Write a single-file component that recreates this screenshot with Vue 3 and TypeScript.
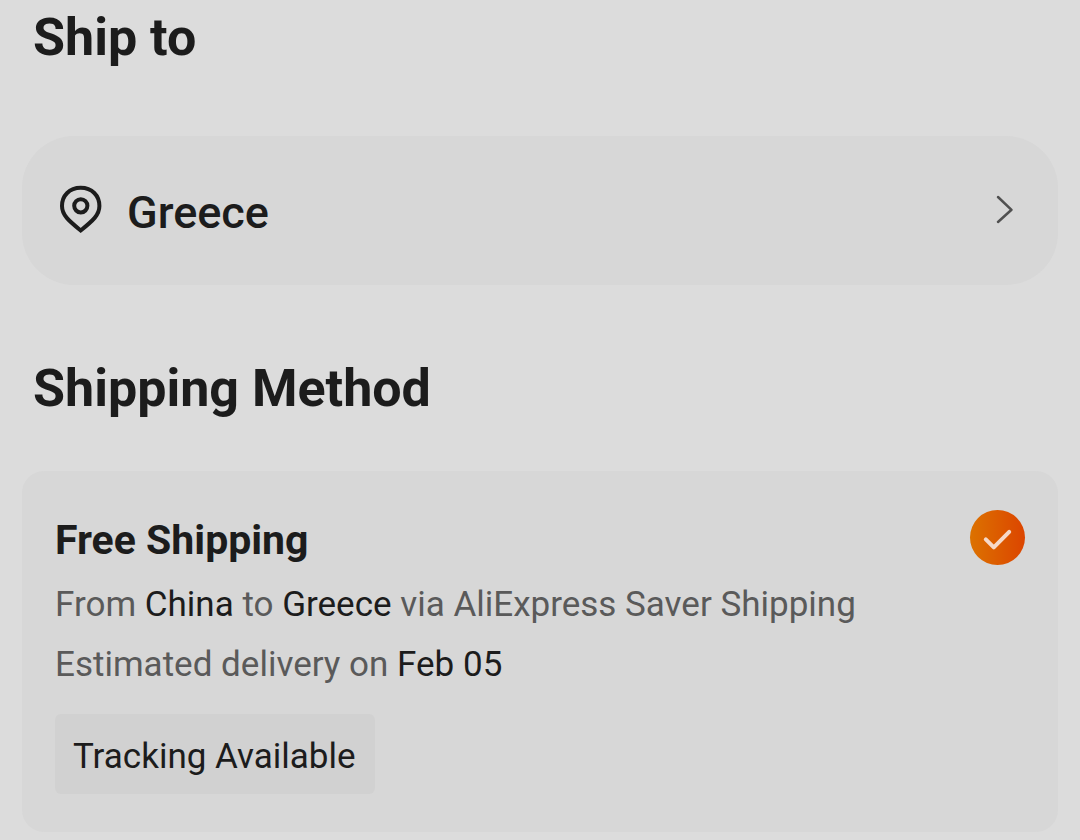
<script setup lang="ts">
import { ref } from 'vue'

interface ShippingMethod {
  id: string
  title: string
  origin: string
  carrier: string
  delivery: string
  tag: string
}

const country = ref('Greece')
const selected = ref('saver')
const methods: ShippingMethod[] = [
  {
    id: 'saver',
    title: 'Free Shipping',
    origin: 'China',
    carrier: 'AliExpress Saver Shipping',
    delivery: 'Feb 05',
    tag: 'Tracking Available',
  },
]
</script>

<template>
  <main class="page">
    <section>
      <h2 class="title">Ship to</h2>
      <button type="button" class="country">
        <svg class="pin" viewBox="0 0 44 50" aria-hidden="true">
          <path d="M21.700 2.800C10.500 2.800 3 10.500 3 21C3 30 9.500 35.500 21.700 45.500C34 35.500 40.400 30 40.400 21C40.400 10.500 33 2.800 21.700 2.800Z" />
          <circle cx="21.800" cy="20.800" r="6.600" />
        </svg>
        <span class="country-name">{{ country }}</span>
        <svg class="chevron" viewBox="0 0 20 30" aria-hidden="true">
          <path d="M2 2L15.500 14.800L2 27" />
        </svg>
      </button>
    </section>

    <section>
      <h2 class="title method-title">Shipping Method</h2>
      <label v-for="m in methods" :key="m.id" class="method" :for="m.id">
        <span class="details">
          <strong class="name">{{ m.title }}</strong>
          <span class="line">From <b>{{ m.origin }}</b> to <b>{{ country }}</b> via {{ m.carrier }}</span>
          <span class="line">Estimated delivery on <b>{{ m.delivery }}</b></span>
          <span class="tag">{{ m.tag }}</span>
        </span>
        <span class="choice">
          <input :id="m.id" v-model="selected" type="radio" name="method" :value="m.id" />
          <svg v-if="selected === m.id" viewBox="0 0 55 55" aria-hidden="true">
            <path d="M15.800 29.300L23.800 37.300L39.200 21.800" />
          </svg>
        </span>
      </label>
    </section>
  </main>
</template>

<style>
body {
  margin: 0;
  background: #dcdcdc;
}
</style>

<style scoped>
.page {
  padding: 8px 22px;
  color: #1c1c1c;
  font-family: Roboto, "Liberation Sans", sans-serif;
}

.title {
  margin: 0 11px 68px;
  font-size: 52px;
  line-height: 60px;
  font-weight: 700;
}

.method-title {
  margin: 74px 11px 52px;
}

.country {
  box-sizing: border-box;
  display: flex;
  align-items: center;
  width: 100%;
  padding: 43px 42px 44px 37px;
  border: 0;
  border-radius: 52px;
  background: #d7d7d7;
  color: inherit;
  font: inherit;
  text-align: left;
  cursor: pointer;
}

.pin {
  width: 44px;
  height: 50px;
  fill: none;
  stroke: #1c1c1c;
  stroke-width: 4;
}

.country-name {
  flex: 1;
  padding: 6px 0 0 24px;
  font-size: 45px;
  line-height: 56px;
  font-weight: 500;
}

.chevron {
  width: 20px;
  height: 30px;
  fill: none;
  stroke: #505050;
  stroke-width: 2.500;
  stroke-linecap: round;
  stroke-linejoin: round;
}

.method {
  display: flex;
  align-items: flex-start;
  justify-content: space-between;
  gap: 24px;
  padding: 39px 33px 38px;
  border-radius: 22px;
  background: #d7d7d7;
  cursor: pointer;
}

.details {
  display: flex;
  flex-direction: column;
  align-items: flex-start;
  padding-top: 6px;
}

.name {
  margin-bottom: 11px;
  font-size: 41px;
  line-height: 48px;
  font-weight: 700;
}

.line {
  color: #5a5a5a;
  font-size: 35px;
  line-height: 60px;
}

.line b {
  color: #1c1c1c;
  font-weight: 400;
}

.tag {
  margin-top: 19px;
  padding: 13px 19px 7px 18px;
  border-radius: 6px;
  background: #d1d1d1;
  font-size: 35px;
  line-height: 60px;
}

.choice {
  position: relative;
  flex: none;
  width: 55px;
  height: 55px;
}

.choice input {
  appearance: none;
  display: block;
  box-sizing: border-box;
  width: 100%;
  height: 100%;
  margin: 0;
  border: 3px solid #8a8a8a;
  border-radius: 50%;
  cursor: pointer;
}

.choice input:checked {
  border: 0;
  background: linear-gradient(90deg, #dc7200, #dc4500);
}

.choice svg {
  position: absolute;
  inset: 0;
  fill: none;
  stroke: #f6d9c8;
  stroke-width: 4;
  stroke-linecap: round;
  stroke-linejoin: round;
  pointer-events: none;
}
</style>
